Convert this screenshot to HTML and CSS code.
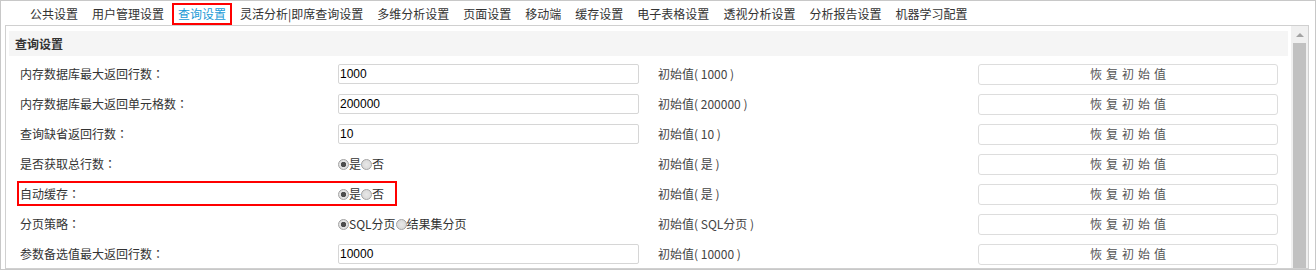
FILE: index.html
```html
<!DOCTYPE html>
<html lang="zh-CN">
<head>
    <meta charset="UTF-8">
    <title>查询设置</title>
    <link rel="stylesheet" href="styles.css">
</head>
<body>
    <div class="frame">
        <ul class="tabs">
            <li>公共设置</li>
            <li>用户管理设置</li>
            <li class="active">查询设置</li>
            <li>灵活分析|即席查询设置</li>
            <li>多维分析设置</li>
            <li>页面设置</li>
            <li>移动端</li>
            <li>缓存设置</li>
            <li>电子表格设置</li>
            <li>透视分析设置</li>
            <li>分析报告设置</li>
            <li>机器学习配置</li>
        </ul>
        <div class="panel">
            <div class="panel-body">
                <div class="panel-title">查询设置</div>
                <div class="form">
                    <div class="row">
                        <div class="cell label">内存数据库最大返回行数<span class="colon" lang="zh-TW">：</span></div>
                        <div class="cell"><input class="text" type="text" value="1000"></div>
                        <div class="cell init">初始值( 1000 )</div>
                        <div class="cell"><button class="reset">恢复初始值</button></div>
                    </div>
                    <div class="row">
                        <div class="cell label">内存数据库最大返回单元格数<span class="colon" lang="zh-TW">：</span></div>
                        <div class="cell"><input class="text" type="text" value="200000"></div>
                        <div class="cell init">初始值( 200000 )</div>
                        <div class="cell"><button class="reset">恢复初始值</button></div>
                    </div>
                    <div class="row">
                        <div class="cell label">查询缺省返回行数<span class="colon" lang="zh-TW">：</span></div>
                        <div class="cell"><input class="text" type="text" value="10"></div>
                        <div class="cell init">初始值( 10 )</div>
                        <div class="cell"><button class="reset">恢复初始值</button></div>
                    </div>
                    <div class="row">
                        <div class="cell label">是否获取总行数<span class="colon" lang="zh-TW">：</span></div>
                        <div class="cell radios">
                            <span class="radio checked"></span>是<span class="radio"></span>否
                        </div>
                        <div class="cell init">初始值( 是 )</div>
                        <div class="cell"><button class="reset">恢复初始值</button></div>
                    </div>
                    <div class="row">
                        <div class="mark"></div>
                        <div class="cell label">自动缓存<span class="colon" lang="zh-TW">：</span></div>
                        <div class="cell radios">
                            <span class="radio checked"></span>是<span class="radio"></span>否
                        </div>
                        <div class="cell init">初始值( 是 )</div>
                        <div class="cell"><button class="reset">恢复初始值</button></div>
                    </div>
                    <div class="row">
                        <div class="cell label">分页策略<span class="colon" lang="zh-TW">：</span></div>
                        <div class="cell radios">
                            <span class="radio checked"></span>SQL分页<span class="radio"></span>结果集分页
                        </div>
                        <div class="cell init">初始值( SQL分页 )</div>
                        <div class="cell"><button class="reset">恢复初始值</button></div>
                    </div>
                    <div class="row">
                        <div class="cell label">参数备选值最大返回行数<span class="colon" lang="zh-TW">：</span></div>
                        <div class="cell"><input class="text" type="text" value="10000"></div>
                        <div class="cell init">初始值( 10000 )</div>
                        <div class="cell"><button class="reset">恢复初始值</button></div>
                    </div>
                </div>
            </div>
            <div class="scrollbar">
                <span class="arrow"></span>
                <span class="thumb"></span>
            </div>
        </div>
    </div>
</body>
</html>
```

FILE: styles.css
```css
body {
    margin: 0;
    font-family: "Noto Sans CJK SC", "Liberation Sans", sans-serif;
    font-size: 12px;
    color: #333;
    background-color: #fff;
}
.frame {
    width: 1316px;
    height: 270px;
    box-sizing: border-box;
    border: 1px solid #c8c8c8;
    display: flex;
    flex-direction: column;
    overflow: hidden;
}
.tabs {
    display: flex;
    height: 24px;
    margin: 0;
    padding: 0 0 0 22px;
    list-style: none;
}
.tabs li {
    height: 22px;
    margin: 2px 1px 0 1px;
    padding: 0 4px;
    box-sizing: border-box;
    border: 2px solid transparent;
    line-height: 18px;
    white-space: nowrap;
}
.tabs li.active {
    border-color: #f00;
    color: #1b9ad6;
}
.panel {
    flex: 1;
    display: flex;
    margin: 0 6px 0 4px;
    border: 1px solid #d0d0d0;
    overflow: hidden;
}
.panel-body {
    flex: 1;
    padding: 5px 3px 0 3px;
    overflow: hidden;
}
.panel-title {
    height: 25px;
    padding-left: 6px;
    line-height: 25px;
    font-weight: bold;
    background-color: #f5f5f5;
}
.form {
    margin-top: 3px;
}
.row {
    position: relative;
    display: grid;
    grid-template-columns: 320px 320px 320px 320px;
    height: 30px;
    align-items: center;
}
.cell {
    padding-left: 9px;
    white-space: nowrap;
    line-height: 18px;
}
.cell.label {
    padding-left: 11px;
}
/* centred full-width colon, as in the original UI font */
.colon {
    font-family: "Noto Sans CJK TC", sans-serif;
}
.cell.init {
    padding-left: 9px;
    color: #444;
}
.text {
    display: block;
    width: 301px;
    height: 20px;
    box-sizing: border-box;
    margin: 0;
    padding: 0 1px;
    border: 1px solid #d6d6d6;
    border-radius: 2px;
    font-family: "Liberation Sans", sans-serif;
    font-size: 12px;
    color: #000;
    outline: none;
}
.reset {
    display: block;
    width: 300px;
    height: 21px;
    margin: 0;
    padding: 0 0 0 4px;
    border: 1px solid #ddd;
    border-radius: 3px;
    background-color: #fff;
    font-family: "Noto Sans CJK SC", sans-serif;
    font-size: 12px;
    letter-spacing: 4px;
    color: #555;
    line-height: 18px;
}
.radios {
    display: flex;
    align-items: center;
}
.radio {
    width: 11px;
    height: 11px;
    box-sizing: border-box;
    border: 1px solid #a2a2a2;
    border-radius: 50%;
    background: radial-gradient(circle, #e8e8e8 0, #d4d4d4 100%);
}
.radio.checked {
    background: radial-gradient(circle, #4d4d4d 0, #4d4d4d 2.4px, #e4e4e4 3px, #d8d8d8 100%);
}
.mark {
    position: absolute;
    top: 2px;
    left: 8px;
    width: 380px;
    height: 25px;
    box-sizing: border-box;
    border: 2px solid #f00;
}
.scrollbar {
    width: 17px;
    display: flex;
    flex-direction: column;
    align-items: center;
    background-color: #f0f0f0;
}
.arrow {
    margin-top: 7px;
    width: 0;
    height: 0;
    border-left: 4px solid transparent;
    border-right: 4px solid transparent;
    border-bottom: 4px solid #a3a3a3;
}
.thumb {
    margin-top: 6px;
    width: 13px;
    flex: 1;
    background-color: #c1c1c1;
}
```
